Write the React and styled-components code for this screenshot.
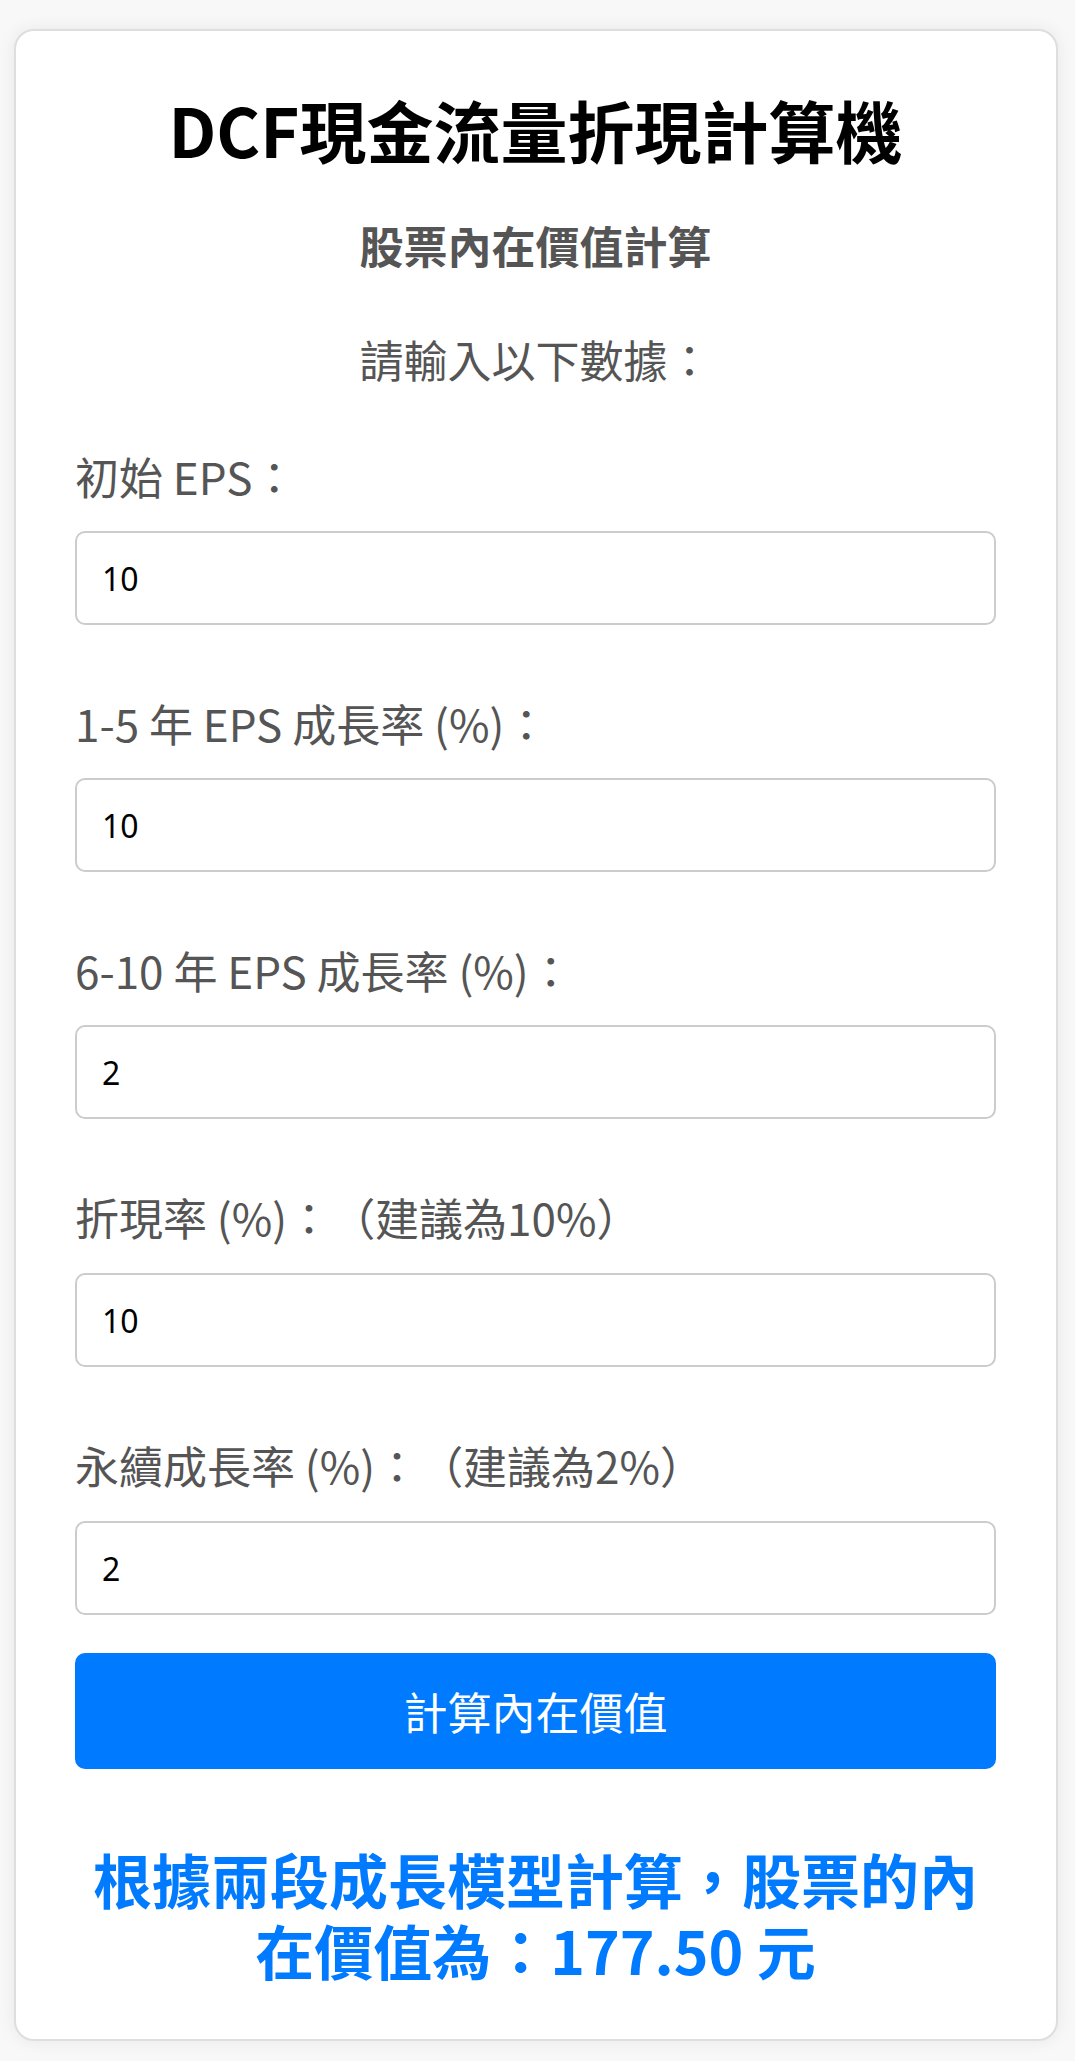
import styled, { createGlobalStyle } from 'styled-components'
import { useState } from 'react'

const GlobalStyle = createGlobalStyle`
  * {
    box-sizing: border-box;
  }
  body {
    margin: 0;
    background: #f8f8f8;
    font-family: "Noto Sans CJK TC", "Noto Sans", sans-serif;
  }
`
const Card = styled.div`
  margin: 29px 17px 23px 14px;
  padding: 58px 60px 54px 59px;
  background: #fff;
  border: 2px solid #dedede;
  border-radius: 20px;
  box-shadow: 0 0 18px rgba(0, 0, 0, 0.07);
`
const Title = styled.h1`
  margin: 0;
  font-size: 67px;
  line-height: 80px;
  font-weight: 700;
  color: #000;
  text-align: center;
`
const SubTitle = styled.h2`
  margin: 46px 0 0;
  font-size: 44px;
  line-height: 60px;
  font-weight: 700;
  color: #555;
  text-align: center;
`
const Intro = styled.p`
  margin: 54px 0 57px;
  font-size: 44px;
  line-height: 60px;
  color: #555;
  text-align: center;
`
const Field = styled.div`
  display: flex;
  flex-direction: column;
  gap: 25px;
  margin-bottom: ${(p) => (p.$last ? '38px' : '68px')};
`
const Label = styled.label`
  font-size: 44px;
  line-height: ${(p) => (p.$tall ? '61px' : '60px')};
  color: #555;
`
const Hint = styled.span`
  margin-left: 22px;
`
const Input = styled.input`
  width: 100%;
  height: 94px;
  padding: 0 25px;
  border: 2px solid #ccc;
  border-radius: 10px;
  font-family: "Noto Sans", "Noto Sans CJK TC", sans-serif;
  font-size: 32px;
  color: #000;
  background: #fff;
  &:focus {
    outline: none;
    border-color: #80bdff;
  }
`
const SubmitBtn = styled.button`
  width: 100%;
  height: 116px;
  border: none;
  border-radius: 10px;
  background: #007bff;
  color: #fff;
  font-family: "Noto Sans CJK TC", sans-serif;
  font-size: 44px;
  cursor: pointer;
`
const Result = styled.div`
  margin-top: 74px;
  font-size: 59px;
  line-height: 71px;
  font-weight: 700;
  color: #007bff;
  text-align: center;
`

const fields = [
  { key: 'eps', label: '初始 EPS：', value: '10' },
  { key: 'g1', label: '1-5 年 EPS 成長率 (%)：', value: '10' },
  { key: 'g2', label: '6-10 年 EPS 成長率 (%)：', value: '2' },
  { key: 'r', label: '折現率 (%)：', hint: '（建議為10%）', value: '10' },
  { key: 'tg', label: '永續成長率 (%)：', hint: '（建議為2%）', value: '2' },
]

function calcValue(v) {
  const eps0 = parseFloat(v.eps)
  const g1 = parseFloat(v.g1) / 100
  const g2 = parseFloat(v.g2) / 100
  const r = parseFloat(v.r) / 100
  const tg = parseFloat(v.tg) / 100
  let eps = eps0
  let total = 0
  for (let y = 1; y <= 10; y++) {
    eps = eps * (1 + (y <= 5 ? g1 : g2))
    total += eps / Math.pow(1 + r, y)
  }
  const terminal = (eps * (1 + tg)) / (r - tg)
  total += terminal / Math.pow(1 + r, 10)
  return total
}

export default function App() {
  const [values, setValues] = useState(
    Object.fromEntries(fields.map((f) => [f.key, f.value]))
  )
  const [result, setResult] = useState('177.50')

  const handleChange = (e) => {
    setValues({ ...values, [e.target.name]: e.target.value })
  }

  const handleCalc = () => {
    const v = calcValue(values)
    if (isFinite(v)) setResult(v.toFixed(2))
  }

  const resultText = `根據兩段成長模型計算，股票的內在價值為：${result} 元`

  return (
    <>
      <GlobalStyle />
      <Card>
        <Title>DCF現金流量折現計算機</Title>
        <SubTitle>股票內在價值計算</SubTitle>
        <Intro>請輸入以下數據：</Intro>
        {fields.map((f, i) => (
          <Field key={f.key} $last={i === fields.length - 1}>
            <Label htmlFor={f.key} $tall={!!f.hint}>
              {f.label}
              {f.hint && <Hint>{f.hint}</Hint>}
            </Label>
            <Input
              id={f.key}
              name={f.key}
              type='number'
              value={values[f.key]}
              onChange={handleChange}
            />
          </Field>
        ))}
        <SubmitBtn onClick={handleCalc}>計算內在價值</SubmitBtn>
        <Result>{resultText}</Result>
      </Card>
    </>
  )
}
